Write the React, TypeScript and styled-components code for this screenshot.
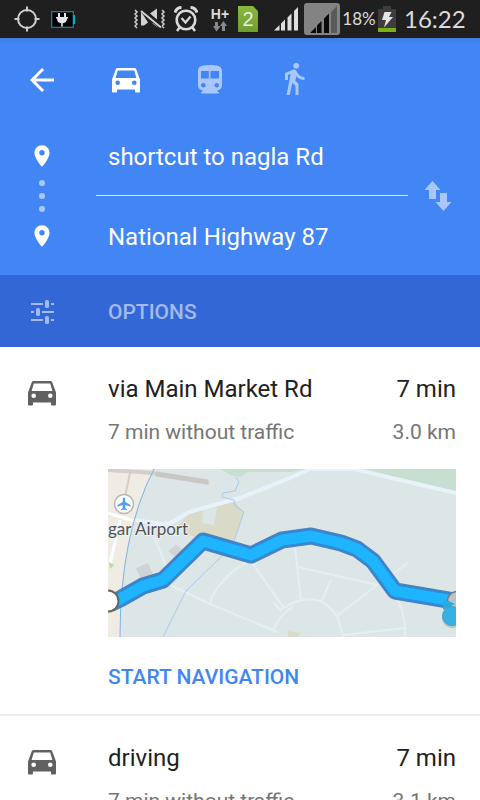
import React from "react";
import styled, { createGlobalStyle } from "styled-components";

const GlobalStyle = createGlobalStyle`
  * { box-sizing: border-box; }
  body { margin: 0; background: #fff; font-family: Roboto, "Noto Sans", sans-serif; }
  button, input { font: inherit; }
`;

const Screen = styled.div`
  display: flex;
  flex-direction: column;
  height: 100vh;
  overflow: hidden;
  background: #fff;
`;

const StatusBar = styled.div`
  display: flex;
  flex: none;
  align-items: center;
  justify-content: space-between;
  height: 38px;
  padding: 0 16px 0 14px;
  background: #1f1f1f;
  color: #dcdcdc;
`;

const StatusGroup = styled.div<{ $gap: number }>`
  display: flex;
  align-items: center;
  gap: ${(p) => p.$gap}px;
`;

const Network = styled.div`
  display: flex;
  flex-direction: column;
  align-items: center;
  width: 20px;
  font: 700 14px/14px "Liberation Sans", sans-serif;
`;

const SimBadge = styled.div`
  width: 20px;
  height: 26px;
  background: linear-gradient(#8cb83f, #6f9c33);
  clip-path: polygon(0 0, 75% 0, 100% 20%, 100% 100%, 0 100%);
  color: #e8eedd;
  font: 400 20px/26px "Liberation Sans", sans-serif;
  text-align: center;
`;

const Percent = styled.span`
  width: 36px;
  font: 400 17px/24px Lato, sans-serif;
  text-align: center;
  white-space: nowrap;
`;

const Clock = styled.time`
  width: 60px;
  font: 400 24px/32px Lato, sans-serif;
  text-align: center;
`;

const Header = styled.header`
  flex: none;
  background: linear-gradient(#3f7de0, #4285f4 6px);
  color: #fff;
`;

const Toolbar = styled.nav`
  display: flex;
  align-items: center;
  gap: 48px;
  height: 80px;
  padding: 4px 24px 0;
`;

const IconButton = styled.button<{ $dim?: boolean }>`
  display: flex;
  align-items: center;
  justify-content: center;
  width: 36px;
  height: 36px;
  padding: 0;
  border: 0;
  background: none;
  color: ${(p) => (p.$dim ? "#a9c7fb" : "#fff")};
  cursor: pointer;
`;

const Places = styled.div`
  display: grid;
  grid-template-columns: 84px 1fr 72px;
`;

const Rail = styled.div`
  display: flex;
  flex-direction: column;
  align-items: center;
  gap: 11px;
  padding-top: 25px;
`;

const Fields = styled.div`
  min-width: 0;
  margin-left: 12px;
`;

const Field = styled.input`
  display: block;
  width: 100%;
  height: 77px;
  padding: 0 12px;
  border: 0;
  background: none;
  color: #fff;
  font-size: 24px;
  line-height: 32px;
  outline: none;

  & + & {
    height: 80px;
    border-top: 1px solid #d9e7fd;
    padding-top: 2px;
  }
`;

const SwapCell = styled.div`
  display: flex;
  align-items: center;
  padding: 0 0 2px 12px;
`;

const Options = styled.button`
  display: flex;
  flex: none;
  align-items: center;
  gap: 48px;
  width: 100%;
  height: 72px;
  padding: 2px 24px 0;
  border: 0;
  background: #3367d6;
  color: #a2baec;
  font-size: 21px;
  font-weight: 500;
  line-height: 28px;
  cursor: pointer;
`;

const RouteList = styled.main`
  flex: 1;
  min-height: 0;
  overflow-y: auto;
  scrollbar-width: none;
`;

const RouteCard = styled.article`
  display: grid;
  grid-template-columns: 84px 1fr;
  padding: 26px 24px 0;

  & + & { border-top: 2px solid #ebebeb; }
`;

const RouteIcon = styled.div`
  padding: 7px 0 0 4px;
  color: #616161;
`;

const RouteBody = styled.div`
  min-width: 0;
`;

const Line = styled.div`
  display: flex;
  justify-content: space-between;
  gap: 12px;
`;

const Title = styled(Line)`
  color: #212121;
  font-size: 24px;
  line-height: 32px;
`;

const Detail = styled(Line)`
  margin-top: 12px;
  color: #757575;
  font-size: 21px;
  line-height: 30px;
`;

const Name = styled.h2`
  margin: 0;
  font: inherit;
`;

const MapFrame = styled.div`
  height: 168px;
  margin-top: 22px;

  svg { display: block; width: 100%; height: 100%; }
`;

const StartButton = styled.button`
  display: block;
  height: 77px;
  padding: 2px 0 0;
  border: 0;
  background: none;
  color: #4285f4;
  font-size: 21px;
  font-weight: 500;
  line-height: 28px;
  cursor: pointer;
`;

const TargetIcon = () => (
  <svg width="26" height="26" viewBox="0 0 26 26" fill="none" stroke="#cfcfcf" strokeWidth="2">
    <circle cx="13" cy="13" r="9" />
    <path d="M13 0.5v5M13 20.5v5M0.5 13h5M20.5 13h5" />
  </svg>
);

const PlugIcon = () => (
  <svg width="24" height="17" viewBox="0 0 24 17">
    <rect x=".7" y=".7" width="21.6" height="15.6" fill="#000" stroke="#1c87a5" strokeWidth="1.2" />
    <path d="M22 4h2v9h-2z" fill="#16a5d8" />
    <path d="M7 2h2v4h4V2h2v4h2v1.500h-1c0 3-1.500 4.500-4.200 4.800V15.500h-1.600v-3.200C7.500 12 6 10.500 6 7.500H5V6h2z" fill="#e4e4e4" />
  </svg>
);

const MuteIcon = () => (
  <svg width="32" height="22" viewBox="0 0 32 22" fill="none" stroke="#d2d2d2">
    <path d="M1 2l2 2-2 2 2 2-2 2 2 2-2 2 2 2-2 2 2 2M28 2l2 2-2 2 2 2-2 2 2 2-2 2 2 2-2 2 2 2" strokeWidth="1.500" />
    <path d="M7 3.500v14h3l4-3zM16 5.500L23 .5v11zM18 15l5 4v-3z" fill="#d2d2d2" stroke="none" />
    <path d="M7 1.500L27 19.500" stroke="#1f1f1f" strokeWidth="4" />
    <path d="M7 3L27 19.500" strokeWidth="2" />
  </svg>
);

const AlarmIcon = () => (
  <svg width="24" height="26" viewBox="0 0 24 26" fill="none" stroke="#dadada">
    <circle cx="12" cy="14" r="9.300" strokeWidth="2.600" />
    <path d="M7.500 12l4 4.500 5-6" strokeWidth="2.200" />
    <path d="M1 6.500C2 3.500 4.500 1.500 7.500 1.500M23 6.500C22 3.500 19.500 1.500 16.500 1.500" strokeWidth="3" />
    <path d="M6 21l-3 4M18 21l3 4" strokeWidth="2.500" />
  </svg>
);

const DataArrows = () => (
  <svg width="14" height="11" viewBox="0 0 14 11" fill="#8a8a8a">
    <path d="M2 1h3v4h2.500L3.500 10.500 0 5h2zM9 10h3V5h2L10.500 0 7 5h2z" />
  </svg>
);

const SignalIcon = () => (
  <svg width="25" height="24" viewBox="0 0 25 24" fill="#dedede">
    <path d="M0 23.500L5.500 18v5.500zM7 16.500l4-4v11H7zM13.500 10.500l4-4v17h-4zM20 4l4-4v23.500h-4z" />
  </svg>
);

const WeakSignalIcon = () => (
  <svg width="36" height="32" viewBox="0 0 36 32">
    <rect width="36" height="32" rx="3" fill="#838383" />
    <path d="M6 30l6-6v6zM13 22.500l4.500-4.500v12H13zM20 15.500l5-5V30h-5z" fill="#090909" />
    <path d="M27 9l6-6v27h-6z" fill="#5a5a5a" />
  </svg>
);

const BatteryIcon = () => (
  <svg width="18" height="26" viewBox="0 0 18 26">
    <path d="M5 0h8v3h5v19H0V3h5z" fill="#3d3d3d" />
    <path d="M0 22h18v4H0z" fill="#7bad1c" />
    <path d="M6.500 6h7l-2.500 5h4L6 21.500l2-7.500H4z" fill="#e6e6e6" />
  </svg>
);

const BackIcon = () => (
  <svg width="36" height="36" viewBox="0 0 24 24" fill="currentColor">
    <path d="M20 11H7.830l5.590-5.590L12 4l-8 8 8 8 1.410-1.410L7.830 13H20v-2z" />
  </svg>
);

const CarIcon = () => (
  <svg width="28" height="26" viewBox="0 0 28 26" fill="currentColor" fillRule="evenodd">
    <path d="M5.800 1h16.400c1.200 0 1.800.5 2.100 1.500L28 12.500v11.500c0 1-.4 1.500-1.400 1.500h-2.200c-1 0-1.400-.5-1.400-1.500v-1.500H5V24c0 1-.4 1.500-1.400 1.500H1.400C.4 25.500 0 25 0 24V12.500L3.700 2.500C4 1.500 4.600 1 5.800 1zM5.800 3.500L3.600 11h20.800l-2.200-7.500zM5.700 13.400a2.300 2.300 0 1 0 0 4.600 2.300 2.300 0 0 0 0-4.600zm16.600 0a2.300 2.300 0 1 0 0 4.600 2.300 2.300 0 0 0 0-4.600z" />
  </svg>
);

const TrainIcon = () => (
  <svg width="36" height="36" viewBox="0 0 24 24" fill="currentColor">
    <path d="M12 2c-4.420 0-8 .5-8 4v9.500C4 17.430 5.570 19 7.500 19L6 20.500v.5h12v-.5L16.500 19c1.930 0 3.500-1.570 3.500-3.500V6c0-3.500-3.580-4-8-4zM7.500 17c-.83 0-1.500-.67-1.500-1.500S6.670 14 7.500 14s1.500.67 1.500 1.500S8.330 17 7.500 17zm3.700-6H6V6h5.200v5zm1.100 0V6H18v5h-5.700zm4.200 6c-.83 0-1.500-.67-1.500-1.500s.67-1.500 1.500-1.500 1.500.67 1.500 1.500-.67 1.500-1.500 1.500z" />
  </svg>
);

const WalkIcon = () => (
  <svg width="36" height="36" viewBox="0 1 24 24" fill="currentColor">
    <path d="M13.500 5.500c1.100 0 2-.9 2-2s-.9-2-2-2-2 .9-2 2 .9 2 2 2zM9.800 8.900L7 23h2.100l1.800-8 2.100 2v6h2v-7.500l-2.100-2 .6-3C14.800 12 16.800 13 19 13v-2c-1.900 0-3.500-1-4.300-2.400l-1-1.600c-.4-.6-1-1-1.700-1-.3 0-.5.1-.8.1L6 8.300V13h2V9.600l1.800-.7" />
  </svg>
);

const PinIcon = () => (
  <svg width="26" height="26" viewBox="0 0 24 24" fill="#fff">
    <path d="M12 2C8.130 2 5 5.130 5 9c0 5.250 7 13 7 13s7-7.750 7-13c0-3.870-3.130-7-7-7zm0 9.500a2.500 2.500 0 1 1 0-5 2.500 2.500 0 0 1 0 5z" />
  </svg>
);

const DotsIcon = () => (
  <svg width="6" height="32" viewBox="0 0 6 32" fill="#a9c7fb">
    <circle cx="3" cy="3" r="3" />
    <circle cx="3" cy="16" r="3" />
    <circle cx="3" cy="29" r="3" />
  </svg>
);

const SwapIcon = () => (
  <svg width="28" height="30" viewBox="0 0 28 30" fill="#a9c7fb">
    <path d="M8.500 0l8 9H12v9H5V9H.5zM19.500 30l-8-9H16v-9h7v9h4.500z" />
  </svg>
);

const TuneIcon = () => (
  <svg width="36" height="36" viewBox="0 0 36 36" fill="currentColor">
    <path d="M7 9h12v2H7zM27 9h3v2h-3zM7 17h3v2H7zM18 17h12v2H18zM7 25h12v2H7zM27 25h3v2h-3z" />
    <rect x="21" y="6" width="4" height="8" rx="1.500" />
    <rect x="12" y="14" width="4" height="8" rx="1.500" />
    <rect x="21" y="22" width="4" height="8" rx="1.500" />
  </svg>
);

const ROUTE =
  "M2 135L12 130 35 117 55 111 95 72 143 86 174 71 203 67 233 74 249 80 265 92 287 122 346 132";

const RouteMap = () => (
  <svg viewBox="0 0 348 168" preserveAspectRatio="xMidYMid slice" role="img" aria-label="Route map">
    <rect width="348" height="168" fill="#dde6e7" />
    <path d="M0 0H46Q13 58 12 168H0z" fill="#f0ece3" />
    <path d="M113 0h88L182 3 140 3l-8 5-10-2z" fill="#c6dfd1" />
    <path d="M244 0h104v23z" fill="#c6dfd1" />
    <path d="M82 43l44-11 10 11-11 30-42-6-12-11z" fill="#d9dac8" />
    <path d="M95 40l14-2-3 18-12-2z" fill="#dde6e7" />
    <path d="M0 1L45 4 101 14" fill="none" stroke="#d3cfca" strokeWidth="4" />
    <path d="M48 5l52 8" stroke="#c9c7c4" strokeWidth="5" />
    <path d="M22 4l-5 24" stroke="#d8cdc5" strokeWidth="2" />
    <path d="M0 44l26 8M12 51L2 95" fill="none" stroke="#fff" strokeWidth="3" />
    <path d="M26 51l28 4q8 0 14-4l13-8 51-14 50-20 20-9h44l102 24" fill="none" stroke="#e8f2fa" strokeWidth="4" />
    <g fill="none" stroke="#e5eef1" strokeWidth="2">
      <path d="M46 68l12 29M58 114l44 21 67 28M102 135l2-8q15-24 38-36l34 48M165 161q8-17 20-23" />
      <path d="M187 79l6 53M190 98l79 18 31-22M229 147l40-31M213 133l10-22M235 166l62-7M287 125q12 22 10 43" />
      <path d="M172 141q38-25 58 8l5 19M166 134l8 9" />
    </g>
    <path d="M28 99l12-5 6 14-12 5zM60 82l8-6 12 8-8 8z" fill="#cfd5d6" />
    <path d="M180 162l12 2-2 4h-10z" fill="#d9dac8" />
    <path d="M1 93l5 3-4 4z" fill="#b7dca5" />
    <path d="M46 0Q12 66 12 168" fill="none" stroke="#7fb3de" />
    <path d="M128 8l3 5-4 9-12 2-1 4 12 3 1 6 9 6-10 29M114 87L78 122 55 168" fill="none" stroke="#a9caf0" />
    <circle cx="16" cy="35" r="9.500" fill="#fff" stroke="#b7b7b7" strokeWidth="1.500" />
    <path d="M16 28.500c1 0 1.200 1 1.200 2v2.500l5.300 3v1.500l-5.300-1.500v3l1.800 1.200v1L16 40.500l-3 .7v-1l1.800-1.200v-3L9.500 37.500V36l5.300-3v-2.500c0-1 .2-2 1.200-2z" fill="#4a9df1" />
    <text x="0" y="66" fontFamily="Lato, sans-serif" fontSize="17" fill="#4f5357" stroke="#eef2f2" strokeWidth="2" paintOrder="stroke">
      gar Airport
    </text>
    <path d={ROUTE} fill="none" stroke="#4a83bd" strokeWidth="17" strokeLinejoin="round" />
    <path d={ROUTE} fill="none" stroke="#2f88d8" strokeWidth="14" strokeLinejoin="round" />
    <path d={ROUTE} fill="none" stroke="#1fb4ff" strokeWidth="11" strokeLinejoin="round" />
    <circle cx="0" cy="132" r="10.500" fill="#fff" stroke="#666" strokeWidth="2" />
    <circle cx="349" cy="132" r="9.500" fill="#b9c3c9" stroke="#777" strokeWidth="1.500" />
    <path d="M336 130l11 5-12 6z" fill="#2ca9df" />
    <circle cx="344" cy="149" r="10" fill="#8d9da5" opacity=".5" />
    <circle cx="344" cy="147" r="9.500" fill="#35b1e6" stroke="#4b9fc4" />
  </svg>
);

type Route = { name: string; time: string; detail: string; distance: string; preview?: boolean };

const routes: Route[] = [
  { name: "via Main Market Rd", time: "7 min", detail: "7 min without traffic", distance: "3.0 km", preview: true },
  { name: "driving", time: "7 min", detail: "7 min without traffic", distance: "3.1 km" },
];

const RouteItem = ({ route }: { route: Route }) => (
  <RouteCard>
    <RouteIcon>
      <CarIcon />
    </RouteIcon>
    <RouteBody>
      <Title>
        <Name>{route.name}</Name>
        <span>{route.time}</span>
      </Title>
      <Detail>
        <span>{route.detail}</span>
        <span>{route.distance}</span>
      </Detail>
      {route.preview && (
        <>
          <MapFrame>
            <RouteMap />
          </MapFrame>
          <StartButton type="button">START NAVIGATION</StartButton>
        </>
      )}
    </RouteBody>
  </RouteCard>
);

export default function App() {
  return (
    <Screen>
      <GlobalStyle />
      <StatusBar>
        <StatusGroup $gap={11}>
          <TargetIcon />
          <PlugIcon />
        </StatusGroup>
        <StatusGroup $gap={16}>
          <StatusGroup $gap={12}>
            <StatusGroup $gap={8}>
              <MuteIcon />
              <AlarmIcon />
            </StatusGroup>
            <StatusGroup $gap={8}>
              <Network>
                H+
                <DataArrows />
              </Network>
              <SimBadge>2</SimBadge>
            </StatusGroup>
          </StatusGroup>
          <StatusGroup $gap={8}>
            <StatusGroup $gap={1}>
              <StatusGroup $gap={5}>
                <SignalIcon />
                <WeakSignalIcon />
              </StatusGroup>
              <Percent>18%</Percent>
              <BatteryIcon />
            </StatusGroup>
            <Clock>16:22</Clock>
          </StatusGroup>
        </StatusGroup>
      </StatusBar>
      <Header>
        <Toolbar aria-label="Travel mode">
          <IconButton type="button" aria-label="Back">
            <BackIcon />
          </IconButton>
          <IconButton type="button" aria-label="Driving" aria-pressed="true">
            <CarIcon />
          </IconButton>
          <IconButton type="button" aria-label="Transit" aria-pressed="false" $dim>
            <TrainIcon />
          </IconButton>
          <IconButton type="button" aria-label="Walking" aria-pressed="false" $dim>
            <WalkIcon />
          </IconButton>
        </Toolbar>
        <Places>
          <Rail>
            <PinIcon />
            <DotsIcon />
            <PinIcon />
          </Rail>
          <Fields>
            <Field aria-label="Start" defaultValue="shortcut to nagla Rd" />
            <Field aria-label="Destination" defaultValue="National Highway 87" />
          </Fields>
          <SwapCell>
            <IconButton type="button" aria-label="Swap start and destination">
              <SwapIcon />
            </IconButton>
          </SwapCell>
        </Places>
      </Header>
      <Options type="button">
        <TuneIcon />
        OPTIONS
      </Options>
      <RouteList>
        {routes.map((route) => (
          <RouteItem key={route.name} route={route} />
        ))}
      </RouteList>
    </Screen>
  );
}
